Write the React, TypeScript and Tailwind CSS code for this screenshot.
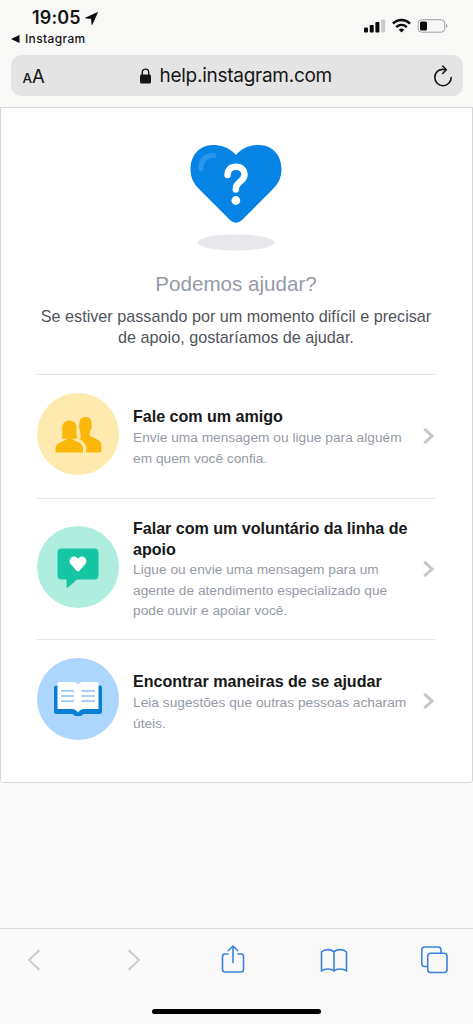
import React, { ReactNode } from 'react';

interface HelpOption {
    title: string;
    description: string;
    icon: ReactNode;
    rowClass: string;
    textClass: string;
}

const HeartIcon = () => (
    <svg width="94" height="108" viewBox="0 0 94 108" className="block">
        <path
            d="M47 10 C40 2 31 0 24 0 C10 0 1.5 11 1.5 24 C1.5 33 5 39 10 44 L41 75 Q47 80.500 53 75 L84 44 C89 39 92.500 33 92.500 24 C92.500 11 84 0 70 0 C63 0 54 2 47 10Z"
            fill="#0584e6"
        />
        <path d="M12 23.500 C12 14.500 17 10.500 25 10.500" fill="none" stroke="#2997ec" strokeWidth="5" strokeLinecap="round" />
        <path
            d="M38.500 30 C38.500 24.500 42 21.800 47 21.800 C52.500 21.800 55.500 25 55.500 29.500 C55.500 37 46.800 36.500 46.800 43.500 V44.500"
            fill="none"
            stroke="#fff"
            strokeWidth="6.400"
            strokeLinecap="round"
        />
        <circle cx="46.800" cy="55.500" r="4.400" fill="#fff" />
        <ellipse cx="47" cy="97.500" rx="38.500" ry="8" fill="#e7e7ec" />
    </svg>
);

const FriendsIcon = () => (
    <svg width="82" height="82" viewBox="0 0 82 82">
        <circle cx="41" cy="41" r="41" fill="#feeaaf" />
        <g fill="#fbb70a">
            <path d="M43.500 41.500 C43.500 39.500 43.200 38 42.500 36 C41.500 34.500 42 33 42.500 31 C42 26.500 44.500 24 48.500 24 C53 24 55 27 54.500 31.500 C55 33.500 55 35 53.800 36 C53.500 38.500 52.500 40 52.500 42 C54 45 64.500 45.500 64.500 52.500 V57.500 Q64.500 59.500 62.500 59.500 H49 C50.500 52 47 48 41.500 46 C44 46 44.500 45 43.500 43.500Z" />
            <path d="M18.500 59.500 V55.500 C18.500 49 28.500 48.500 30 45.500 C28 46 26 46 24.500 45 C26.500 42 24.500 38 25.200 33.500 C26 29.500 29 27.500 32.500 27.500 C37 27.500 39.500 30.500 39.500 35 C39.500 39 39 42 40.500 45 C39 46 37 46 35 45.500 C36.500 48.500 46 48.500 46 55.500 V59.500Z" />
        </g>
    </svg>
);

const ChatIcon = () => (
    <svg width="82" height="82" viewBox="0 0 82 82">
        <circle cx="41" cy="41" r="41" fill="#afeddf" />
        <path
            d="M24.500 22.500 H57.500 Q61.500 22.500 61.500 26.500 V49.500 Q61.500 53.500 57.500 53.500 H40 L31 61.500 Q29.500 62.500 29.500 60.500 V53.500 H24.500 Q20.500 53.500 20.500 49.500 V26.500 Q20.500 22.500 24.500 22.500Z"
            fill="#16c5a1"
        />
        <path
            d="M41 32.800 C39 30.300 36.300 30.200 34.700 31.200 C32.200 32.700 32 36.300 34 38.500 L39.500 44.700 Q41 46 42.500 44.700 L48 38.500 C50 36.300 49.800 32.700 47.300 31.200 C45.700 30.200 43 30.300 41 32.800Z"
            fill="#fff"
        />
    </svg>
);

const ReadingIcon = () => (
    <svg width="82" height="82" viewBox="0 0 82 82">
        <circle cx="41" cy="41" r="41" fill="#acd6fd" />
        <path
            d="M19.500 27.500 H63 Q65 27.500 65 29.500 V53.500 Q65 56 62.500 56 H46.500 Q45 58.200 41 58.200 Q37 58.200 35.500 56 H19.500 Q17 56 17 53.500 V29.500 Q17 27.500 19.500 27.500Z"
            fill="#087fd3"
        />
        <path
            d="M20.500 25.500 Q20.500 24 22 24 H36.500 Q39.500 24 41 26.500 Q42.500 24 45.500 24 H60 Q61.500 24 61.500 25.500 V51 H47 Q43 51 41 54.500 Q39 51 35 51 H20.500Z"
            fill="#fff"
        />
        <path d="M24 33 H37 M24 38 H37 M24 43 H37 M44.500 33 H58 M44.500 38 H58 M44.500 43 H58" stroke="#a9cff2" strokeWidth="2" />
    </svg>
);

const options: HelpOption[] = [
    {
        title: 'Fale com um amigo',
        description: 'Envie uma mensagem ou ligue para alguém em quem você confia.',
        icon: <FriendsIcon />,
        rowClass: 'h-[124px] pt-[18px]',
        textClass: 'mt-[13px] gap-px',
    },
    {
        title: 'Falar com um voluntário da linha de apoio',
        description: 'Ligue ou envie uma mensagem para um agente de atendimento especializado que pode ouvir e apoiar você.',
        icon: <ChatIcon />,
        rowClass: 'h-[141px] pt-[27px]',
        textClass: '-mt-[8px]',
    },
    {
        title: 'Encontrar maneiras de se ajudar',
        description: 'Leia sugestões que outras pessoas acharam úteis.',
        icon: <ReadingIcon />,
        rowClass: 'h-[142px] pt-[18px]',
        textClass: 'mt-[13px] gap-px',
    },
];

function StatusBar() {
    return (
        <div className="flex h-[55px] justify-between">
            <div className="pl-[11px] pt-[7px]">
                <div className="flex h-[22px] items-center pl-[21px]">
                    <span className="w-[50px] whitespace-nowrap text-[18px] font-semibold leading-[22px] tracking-[0.15px]">19:05</span>
                    <svg width="13" height="13" viewBox="0 0 13 13" className="ml-[3px]">
                        <path d="M12.500 .5 L7 12.500 L6.500 6.500 L.5 6Z" fill="#0b0b0b" stroke="#0b0b0b" strokeWidth=".8" strokeLinejoin="round" />
                    </svg>
                </div>
                <div className="flex h-5 items-center">
                    <svg width="9" height="8" viewBox="0 0 9 8">
                        <path d="M0 4 L8.500 0 V8Z" fill="#0b0b0b" />
                    </svg>
                    <span className="ml-[5px] whitespace-nowrap text-[12px] font-medium leading-5 tracking-[0.35px]">Instagram</span>
                </div>
            </div>
            <div className="mt-[18px] flex h-[15px] items-end pr-[25px]">
                <svg width="84" height="15" viewBox="0 0 84 15">
                    <g fill="#0b0b0b">
                        <rect x="0" y="9.500" width="4" height="5" rx="1" />
                        <rect x="5.700" y="7" width="4" height="7.500" rx="1" />
                        <rect x="11.400" y="4" width="4" height="10.500" rx="1" />
                        <rect x="17.200" y="1.500" width="4" height="13" rx="1" fill="#c9c9c9" />
                    </g>
                    <g fill="none" stroke="#0b0b0b" strokeWidth="2.500">
                        <path d="M29 5.600 C33.800 .9 41.200 .9 46 5.600" />
                        <path d="M32.200 9.100 C35.300 6.300 39.700 6.300 42.800 9.100" />
                    </g>
                    <path d="M34.700 11.700 Q37.500 9.500 40.300 11.700 L37.500 14.500Z" fill="#0b0b0b" />
                    <rect x="54.200" y="1.700" width="26.500" height="12.500" rx="3.500" fill="none" stroke="#a1a1a1" />
                    <rect x="56" y="3.500" width="7" height="9" rx="1.600" fill="#0b0b0b" />
                    <path d="M82 6 Q83.500 6.300 83.500 8 Q83.500 9.700 82 10Z" fill="#a1a1a1" />
                </svg>
            </div>
        </div>
    );
}

function AddressBar() {
    return (
        <div className="mx-[10.500px] flex h-[41px] items-center rounded-[10px] bg-[#e4e4e4] pl-3 pr-[10px]">
            <div className="flex w-[117px] items-baseline pt-[2px]">
                <span className="text-[13.500px] font-medium leading-none">A</span>
                <span className="text-[18.500px] leading-none">A</span>
            </div>
            <svg width="11" height="16" viewBox="0 0 11 16">
                <path d="M2.300 7 V4.300 C2.300 0 8.700 0 8.700 4.300 V7" fill="none" stroke="#161616" strokeWidth="1.400" />
                <rect x="0" y="6.500" width="11" height="9" rx="1.500" fill="#161616" />
            </svg>
            <span className="ml-[9px] mt-px whitespace-nowrap text-[19px] leading-6 tracking-[-0.27px]">help.instagram.com</span>
            <svg width="20" height="22" viewBox="0 0 20 22" className="ml-auto" fill="none" stroke="#161616" strokeWidth="1.600" strokeLinecap="round" strokeLinejoin="round">
                <path d="M12 4.700 C6 3.300 1.800 7.500 1.800 12.500 C1.800 17 5.500 20.700 10 20.700 C14.500 20.700 18.200 17 18.200 12.500" />
                <path d="M9.700 1 L13.300 4.800 L9.700 8.500" />
            </svg>
        </div>
    );
}

function OptionRow({ option }: { option: HelpOption }) {
    return (
        <a className={`flex border-t border-[#e3e4e6] ${option.rowClass}`}>
            <div className="h-[82px] w-[82px] shrink-0">{option.icon}</div>
            <div className={`ml-[14px] flex w-[281px] shrink-0 flex-col ${option.textClass}`}>
                <h2 className="text-[16.1px] font-bold leading-[21px] tracking-[-0.03px] text-[#17181a]">{option.title}</h2>
                <p className="text-[13.7px] leading-[20.500px] tracking-[0.02px] text-[#959aa5]">{option.description}</p>
            </div>
            <svg width="12" height="18" viewBox="0 0 12 18" className="ml-[9px] mt-[34px] shrink-0">
                <path d="M1.300 1.800 L9 9 L1.300 16.200" fill="none" stroke="#c4c6ca" strokeWidth="3" />
            </svg>
        </a>
    );
}

function Toolbar() {
    return (
        <footer className="flex h-[96px] flex-col border-t border-[#dcdcdd] bg-[#f9f9f9]">
            <div className="flex h-[62px] items-center justify-between pl-[27px] pr-[24px]">
                <svg width="14" height="24" viewBox="0 0 14 24" fill="none" stroke="#cacaca" strokeWidth="1.800">
                    <path d="M12.500 2 L2 12 L12.500 22" />
                </svg>
                <svg width="14" height="24" viewBox="0 0 14 24" className="ml-[12px]" fill="none" stroke="#cacaca" strokeWidth="1.800">
                    <path d="M1.500 2 L12 12 L1.500 22" />
                </svg>
                <svg width="24" height="30" viewBox="0 0 24 30" className="ml-[7px]" fill="none" stroke="#3b82dc" strokeWidth="1.600" strokeLinecap="round" strokeLinejoin="round">
                    <path d="M7 9 H4 Q1.500 9 1.500 11.500 V24.500 Q1.500 27 4 27 H20 Q22.500 27 22.500 24.500 V11.500 Q22.500 9 20 9 H17" />
                    <path d="M12 17.500 V1.200 M7.200 5.700 L12 1 L16.800 5.700" />
                </svg>
                <svg width="28" height="24" viewBox="0 0 28 24" className="ml-px" fill="none" stroke="#3b82dc" strokeWidth="1.600" strokeLinejoin="round">
                    <path d="M14 4 C11.500 .8 4.500 .8 1.500 4 V23 C4.500 20.300 11.500 20.300 14 23 C16.500 20.300 23.500 20.300 26.500 23 V4 C23.500 .8 16.500 .8 14 4Z M14 4 V23" />
                </svg>
                <svg width="28" height="28" viewBox="0 0 28 28" fill="none" stroke="#3b82dc" strokeWidth="1.600">
                    <path d="M7 20.500 H3.500 Q.8 20.500 .8 17.500 V4 Q.8 1 3.500 1 H17 Q20 1 20 4 V7" />
                    <rect x="6.700" y="7.200" width="19.300" height="19.300" rx="3" />
                </svg>
            </div>
            <div className="ml-[151.500px] mt-[17.500px] h-[5.500px] w-[169px] rounded-full bg-black" />
        </footer>
    );
}

export default function App() {
    return (
        <div className="flex h-[1024px] w-[473px] flex-col overflow-hidden bg-[#f9f9f9]">
            <header className="h-[107px] shrink-0 bg-[#f8f8f7] font-['Inter',sans-serif] text-[#161616]">
                <StatusBar />
                <AddressBar />
            </header>
            <main className="flex-1 font-['Liberation_Sans',sans-serif]">
                <section className="h-[675.500px] rounded-b-[3px] border border-[#d5d6d8] bg-white pl-9 pr-[37px] pt-[37px]">
                    <div className="flex flex-col items-center">
                        <HeartIcon />
                        <h1 className="mt-[17px] text-[20.600px] leading-[28px] text-[#959aa5]">Podemos ajudar?</h1>
                        <p className="mt-[8px] h-[68px] whitespace-nowrap text-center text-[16.200px] leading-[21px] text-[#50545b]">
                            Se estiver passando por um momento difícil e precisar
                            <br />
                            de apoio, gostaríamos de ajudar.
                        </p>
                    </div>
                    {options.map((option) => (
                        <OptionRow key={option.title} option={option} />
                    ))}
                </section>
            </main>
            <Toolbar />
        </div>
    );
}
